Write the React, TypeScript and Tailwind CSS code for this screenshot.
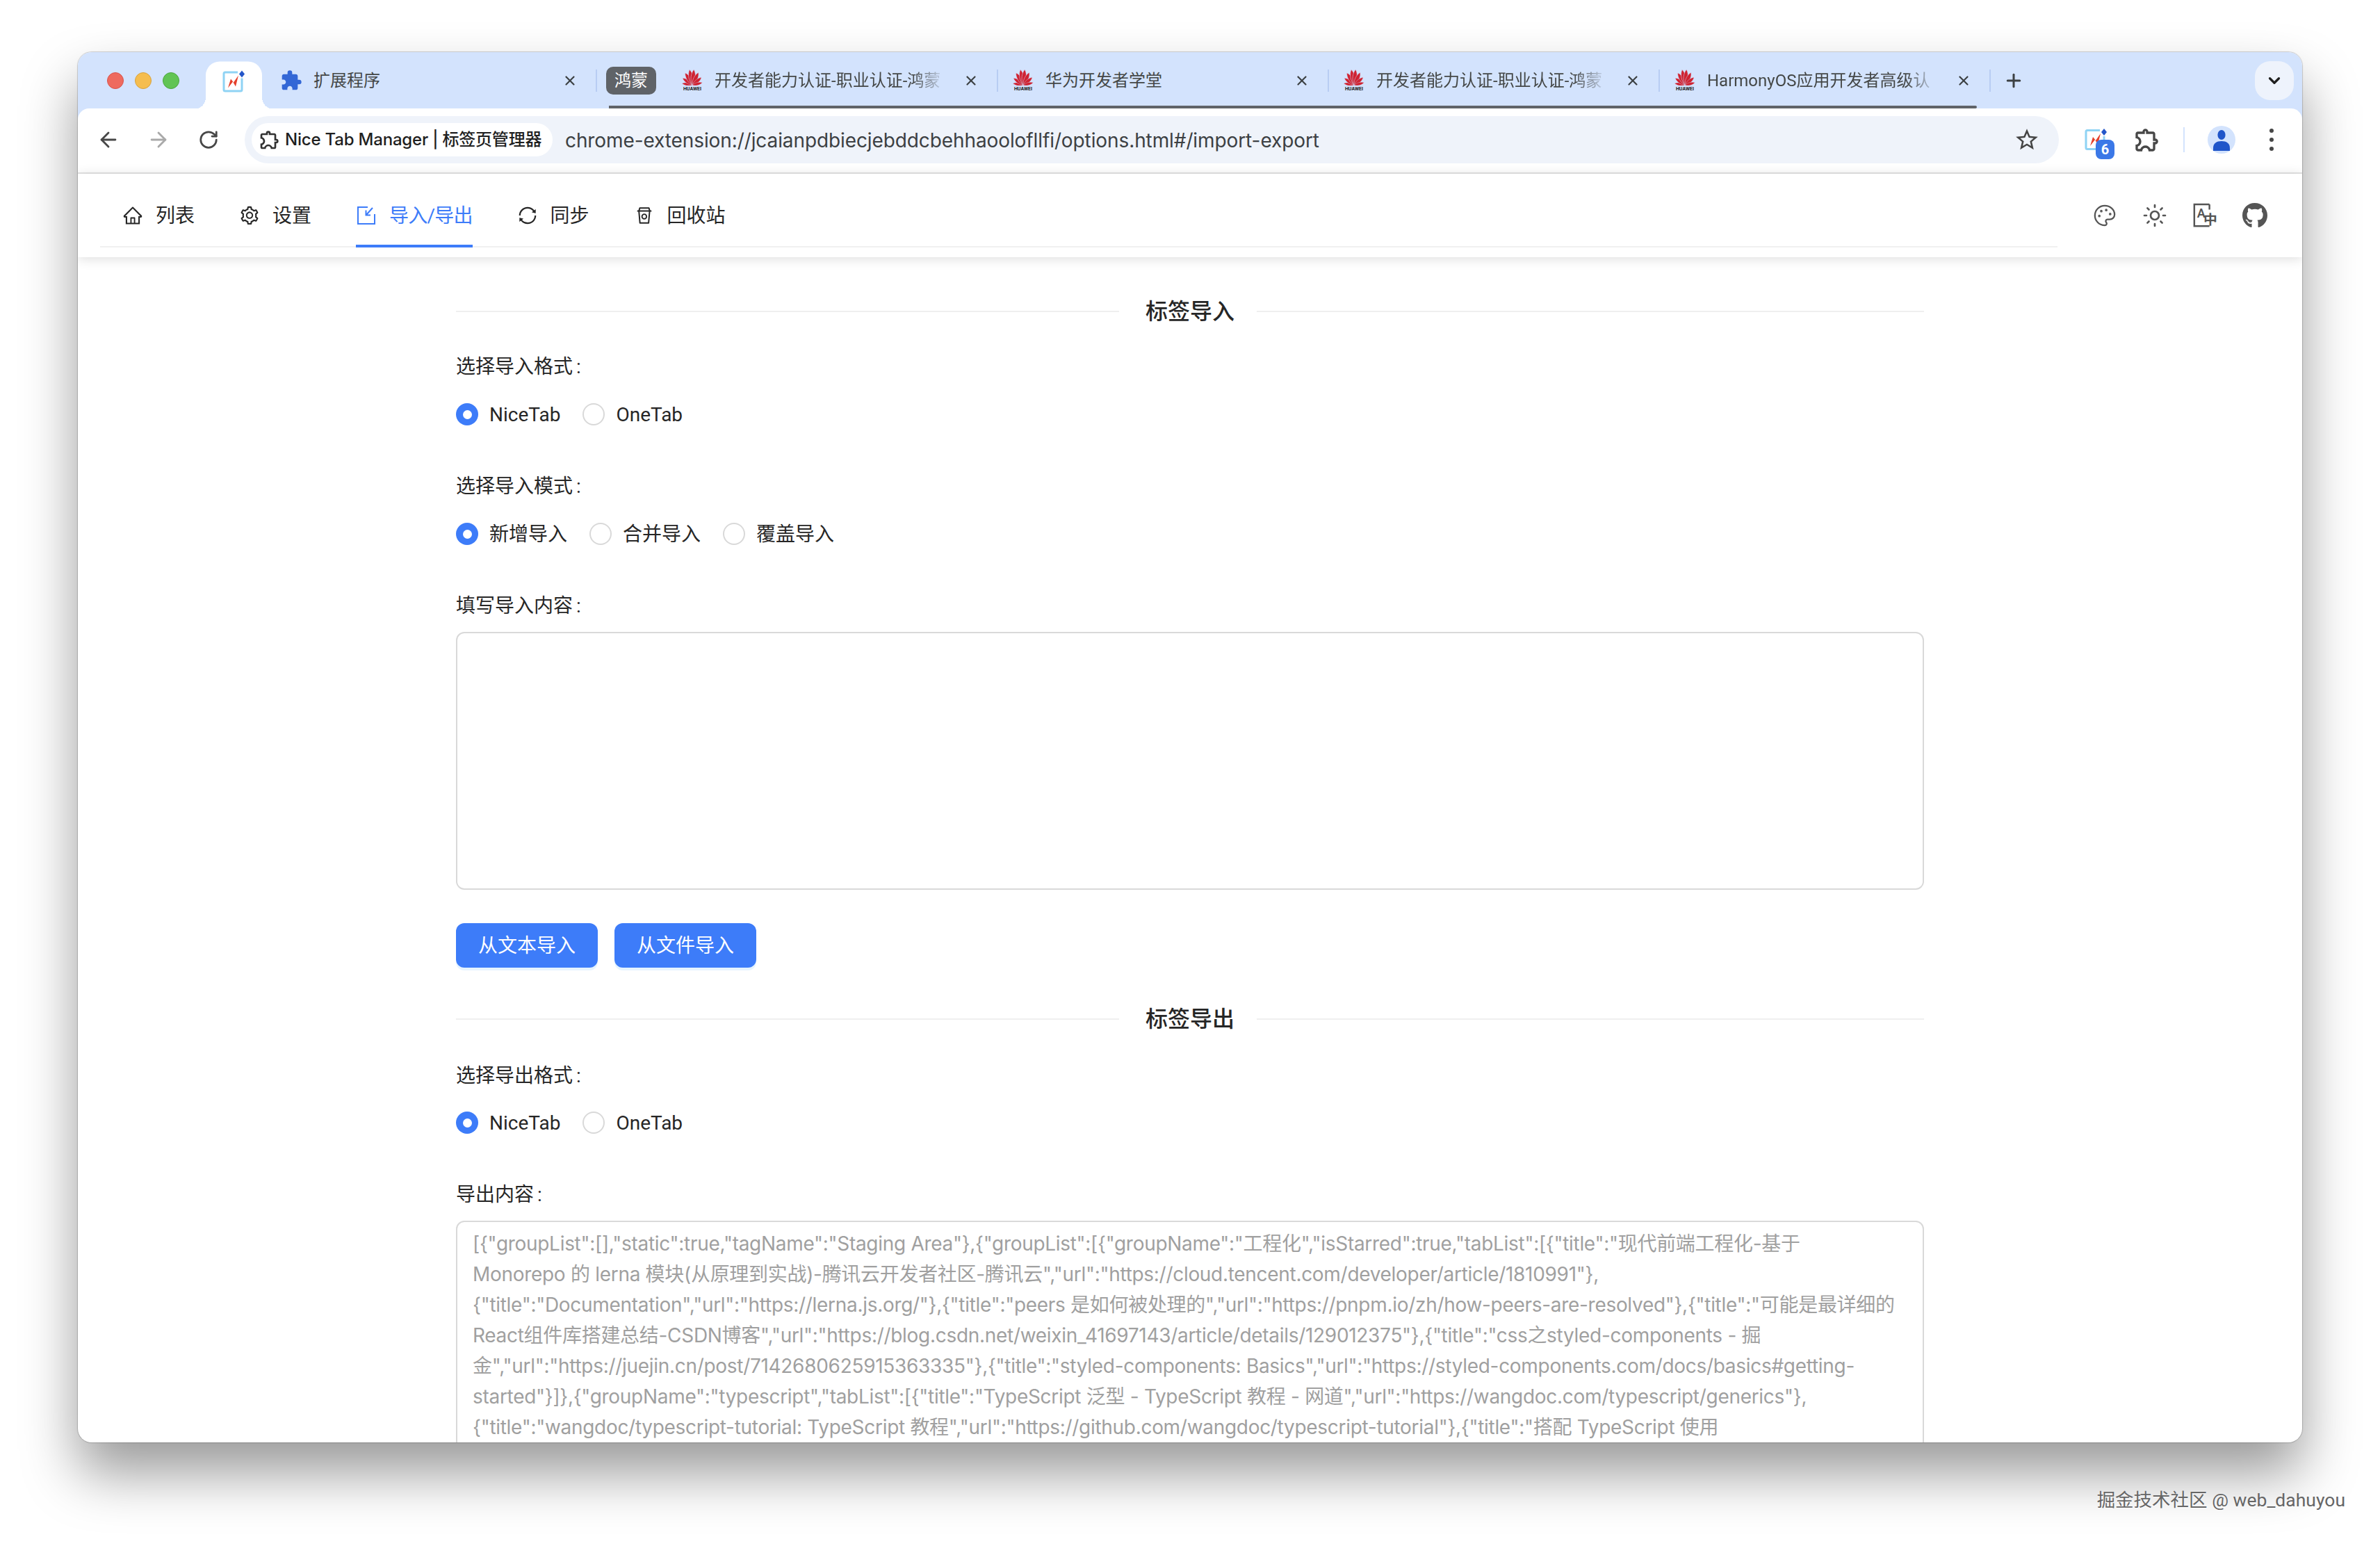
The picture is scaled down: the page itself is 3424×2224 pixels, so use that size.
import type { ReactNode } from 'react';
import { ArrowLeft, ArrowRight, ChevronDown, Palette, Plus, RotateCw, Sun, X } from 'lucide-react';
import { AiOutlineHome, AiOutlineRest, AiOutlineSetting, AiOutlineSync } from 'react-icons/ai';
import { FaGithub } from 'react-icons/fa';
import { MdExtension, MdOutlineExtension, MdOutlineStarBorder } from 'react-icons/md';

const exportLines = [
  '[{"groupList":[],"static":true,"tagName":"Staging Area"},{"groupList":[{"groupName":"工程化","isStarred":true,"tabList":[{"title":"现代前端工程化-基于',
  'Monorepo 的 lerna 模块(从原理到实战)-腾讯云开发者社区-腾讯云","url":"https://cloud.tencent.com/developer/article/1810991"},',
  '{"title":"Documentation","url":"https://lerna.js.org/"},{"title":"peers 是如何被处理的","url":"https://pnpm.io/zh/how-peers-are-resolved"},{"title":"可能是最详细的',
  'React组件库搭建总结-CSDN博客","url":"https://blog.csdn.net/weixin_41697143/article/details/129012375"},{"title":"css之styled-components - 掘',
  '金","url":"https://juejin.cn/post/7142680625915363335"},{"title":"styled-components: Basics","url":"https://styled-components.com/docs/basics#getting-',
  'started"}]},{"groupName":"typescript","tabList":[{"title":"TypeScript 泛型 - TypeScript 教程 - 网道","url":"https://wangdoc.com/typescript/generics"},',
  '{"title":"wangdoc/typescript-tutorial: TypeScript 教程","url":"https://github.com/wangdoc/typescript-tutorial"},{"title":"搭配 TypeScript 使用',
];

function HuaweiIcon() {
  const petals = [
    { a: -78, s: 0.66 },
    { a: -52, s: 0.76 },
    { a: -28, s: 0.9 },
    { a: -8, s: 1 },
    { a: 8, s: 1 },
    { a: 28, s: 0.9 },
    { a: 52, s: 0.76 },
    { a: 78, s: 0.66 },
  ];
  return (
    <span className="flex w-[32px] shrink-0 flex-col items-center">
      <svg width="32" height="24" viewBox="0 0 32 24">
        {petals.map((p, i) => (
          <path
            key={i}
            d="M16 23.5 C11.5 16 11.5 7 15 1 C19.5 6 20 16 16 23.5 Z"
            fill="#cf2231"
            stroke="#d3e3fd"
            strokeWidth="0.5"
            transform={`rotate(${p.a} 16 23.5) translate(16 23.5) scale(${p.s}) translate(-16 -23.5)`}
          />
        ))}
      </svg>
      <span className="mt-[1px] text-[7px] leading-[8px] font-bold text-[#222]">HUAWEI</span>
    </span>
  );
}

function NiceTabIcon() {
  return (
    <svg width="36" height="36" viewBox="0 0 36 36" className="shrink-0">
      <path d="M23 4.5H5a2 2 0 0 0-2 2v23a2 2 0 0 0 2 2h22a2 2 0 0 0 2-2V13" fill="none" stroke="#8fd3f4" strokeWidth="3" />
      <path d="M9 27 L13 14 L17 19 L24 9 L20 25 L16 18 Z" fill="#e5402c" />
      <path d="M29 2 L33 7 L29 12 L25 7 Z" fill="#2456c9" />
    </svg>
  );
}

function ChromeTab({ icon, title, fade = true }: { icon: ReactNode; title: string; fade?: boolean }) {
  return (
    <div className="flex h-[40px] w-[456px] shrink-0 items-center">
      <span className="flex w-[32px] shrink-0 justify-center">{icon}</span>
      <span
        className={
          fade
            ? 'ml-[16px] w-[332px] overflow-hidden text-[24px] leading-[32px] whitespace-nowrap text-[#444746] [mask-image:linear-gradient(to_right,black_86%,transparent)]'
            : 'ml-[16px] w-[332px] overflow-hidden text-[24px] leading-[32px] whitespace-nowrap text-[#444746]'
        }
      >
        {title}
      </span>
      <span className="ml-[25px] flex w-[24px] justify-center">
        <X size={22} strokeWidth={2.4} className="text-[#3c4043]" />
      </span>
      <span className="ml-[25px] h-[32px] w-[2px] bg-[#b8cdf3]" />
    </div>
  );
}

function TabStrip() {
  return (
    <div className="flex h-[81px] shrink-0 items-center bg-[#d3e3fd]">
      <div className="ml-[42px] flex gap-[16px]">
        <span className="size-[24px] rounded-full border border-[#d9534c] bg-[#ee6a5f]" />
        <span className="size-[24px] rounded-full border border-[#d8a23c] bg-[#f5bd4f]" />
        <span className="size-[24px] rounded-full border border-[#4da63f] bg-[#61c454]" />
      </div>
      {/* active tab with the little flares at its foot */}
      <div className="relative ml-[38px] flex h-[68px] w-[81px] translate-y-[6.5px] items-center justify-center rounded-t-[20px] bg-white">
        <span className="absolute bottom-0 -left-[16px] size-[16px] bg-[radial-gradient(circle_at_0_0,transparent_16px,white_16px)]" />
        <span className="absolute -right-[16px] bottom-0 size-[16px] bg-[radial-gradient(circle_at_100%_0,transparent_16px,white_16px)]" />
        <span className="-mt-[10px]">
          <NiceTabIcon />
        </span>
      </div>
      <div className="ml-[26px]">
        <ChromeTab icon={<MdExtension size={32} className="text-[#3367d6]" />} title="扩展程序" fade={false} />
      </div>
      <div className="relative ml-[13px] flex items-center">
        <span className="flex h-[40px] w-[72px] items-center justify-center rounded-[10px] bg-[#5f6368] text-[24px] leading-[32px] text-white">
          鸿蒙
        </span>
        <div className="ml-[36px] flex gap-[20px]">
          <ChromeTab icon={<HuaweiIcon />} title="开发者能力认证-职业认证-鸿蒙" />
          <ChromeTab icon={<HuaweiIcon />} title="华为开发者学堂" fade={false} />
          <ChromeTab icon={<HuaweiIcon />} title="开发者能力认证-职业认证-鸿蒙" />
          <ChromeTab icon={<HuaweiIcon />} title="HarmonyOS应用开发者高级认" />
        </div>
        <span className="absolute right-[20px] -bottom-[20px] left-[4px] h-[4px] rounded-r-[2px] bg-[#5f6368]" />
      </div>
      <Plus size={30} strokeWidth={2.4} className="ml-[18px] text-[#3c4043]" />
      <div className="mr-[12px] ml-auto flex h-[56px] w-[56px] items-center justify-center rounded-[22px] bg-[#eef3fc]">
        <ChevronDown size={26} strokeWidth={3} className="text-[#1f1f1f]" />
      </div>
    </div>
  );
}

function Toolbar() {
  return (
    <div className="flex h-[94px] items-center rounded-t-[16px] border-b-2 border-[#e4e4e4] bg-white pb-[2px]">
      <ArrowLeft size={34} strokeWidth={2} className="ml-[27px] text-[#474747]" />
      <ArrowRight size={34} strokeWidth={2} className="ml-[38px] text-[#a9a9a9]" />
      <RotateCw size={30} strokeWidth={2.2} className="ml-[40px] text-[#474747]" />
      <div className="ml-[37px] flex h-[68px] w-[2610px] items-center rounded-full bg-[#eff3fa]">
        <div className="ml-[10px] flex h-[48px] w-[433px] items-center rounded-full bg-white pl-[10px]">
          <MdOutlineExtension size={32} className="text-[#333]" />
          <span className="ml-[6px] font-['Inter','Noto_Sans_CJK_SC',sans-serif] text-[24px] leading-[32px] font-medium tracking-[-0.2px] whitespace-nowrap text-[#1f1f1f]">
            Nice Tab Manager | 标签页管理器
          </span>
        </div>
        <span className="ml-[18px] pt-[2px] font-['Inter',sans-serif] text-[28px] leading-[36px] tracking-[-0.1px] whitespace-nowrap text-[#3c4043]">
          chrome-extension://jcaianpdbiecjebddcbehhaoolofllfi/options.html#/import-export
        </span>
        <MdOutlineStarBorder size={38} className="mr-[27px] ml-auto text-[#444]" />
      </div>
      <div className="relative ml-[36px] flex">
        <NiceTabIcon />
        <span className="absolute -right-[8px] -bottom-[10px] flex h-[28px] w-[27px] items-center justify-center rounded-[8px] bg-[#3b78e7] text-[20px] leading-[24px] font-bold text-white">
          6
        </span>
      </div>
      <MdOutlineExtension size={40} className="ml-[35px] text-[#474747]" />
      <span className="ml-[32px] h-[36px] w-[2px] bg-[#d3e3fd]" />
      <span className="ml-[33px] flex h-[40px] w-[40px] items-center justify-center overflow-hidden rounded-full bg-[#d3e3fd]">
        <svg width="28" height="32" viewBox="0 0 28 32" fill="#1f55c9">
          <ellipse cx="14" cy="9" rx="5.6" ry="7" />
          <path d="M2 28c0-7 5-10 12-10s12 3 12 10v4H2z" />
        </svg>
      </span>
      <span className="ml-[49px] flex flex-col gap-[7px]">
        <span className="size-[6px] rounded-full bg-[#474747]" />
        <span className="size-[6px] rounded-full bg-[#474747]" />
        <span className="size-[6px] rounded-full bg-[#474747]" />
      </span>
    </div>
  );
}

function ImportIcon() {
  return (
    <svg width="30" height="30" viewBox="0 0 30 30" fill="none" stroke="#3d7cf9" strokeWidth="2">
      <path d="M17 3H3v24h24V13" />
      <path d="M24 4l-9 10M14.5 7.5v7H21" />
    </svg>
  );
}

function NavTab({ icon, label, active = false }: { icon: ReactNode; label: string; active?: boolean }) {
  return (
    <div
      className={
        active
          ? '-mb-[2px] flex h-[106px] items-center gap-[18px] border-b-4 border-[#3d7cf9] pt-[18px] tracking-[-0.8px] text-[#3d7cf9]'
          : '-mb-[2px] flex h-[106px] items-center gap-[18px] border-b-4 border-transparent pt-[18px] text-[#262626]'
      }
    >
      <span className="flex w-[30px] justify-center">{icon}</span>
      <span className="pt-[2px] text-[28px] leading-[44px] whitespace-nowrap">{label}</span>
    </div>
  );
}

function TranslateIcon() {
  return (
    <svg width="38" height="38" viewBox="0 0 38 38" fill="none">
      <path d="M26 2H3v33h23M26 2v8" stroke="#555" strokeWidth="2.6" />
      <text x="7" y="22" fontSize="19" fontWeight="600" fill="#555" fontFamily="Roboto, sans-serif">A</text>
      <text x="17" y="33" fontSize="21" fontWeight="600" fill="#555" fontFamily="'Noto Sans CJK SC', sans-serif">中</text>
    </svg>
  );
}

function NavBar() {
  return (
    <div className="relative z-10 flex h-[120px] shrink-0 items-center bg-white shadow-[0_2px_16px_rgba(0,0,0,0.14)]">
      <div className="ml-[32px] flex h-[106px] w-[2816px] gap-[64px] self-start border-b-2 border-[#f0f0f0] pl-[32px]">
        <NavTab icon={<AiOutlineHome size={32} />} label="列表" />
        <NavTab icon={<AiOutlineSetting size={32} />} label="设置" />
        <NavTab icon={<ImportIcon />} label="导入/导出" active />
        <NavTab icon={<AiOutlineSync size={32} />} label="同步" />
        <NavTab icon={<AiOutlineRest size={30} />} label="回收站" />
      </div>
      <div className="ml-[50px] flex gap-[36px] text-[#555]">
        <span className="flex size-[36px] items-center justify-center"><Palette size={34} strokeWidth={1.6} /></span>
        <span className="flex size-[36px] items-center justify-center"><Sun size={38} strokeWidth={1.8} /></span>
        <span className="flex size-[36px] items-center justify-center"><TranslateIcon /></span>
        <span className="flex size-[36px] items-center justify-center"><FaGithub size={38} /></span>
      </div>
    </div>
  );
}

function Divider({ label }: { label: string }) {
  return (
    <div className="flex h-[44px] items-center">
      <span className="h-[2px] w-[954px] bg-[#efefef]" />
      <span className="pr-[32px] pl-[38px] text-[32px] leading-[44px] font-medium text-[#262626]">{label}</span>
      <span className="h-[2px] flex-1 bg-[#efefef]" />
    </div>
  );
}

function Label({ children }: { children: string }) {
  return (
    <div className="h-[44px] pt-[2px] text-[28px] leading-[44px] text-[#262626]">
      {children}
      <span className="ml-[5px]">:</span>
    </div>
  );
}

function RadioGroup({ options }: { options: string[] }) {
  return (
    <div className="flex h-[44px] items-center gap-[32px]">
      {options.map((o, i) => (
        <span key={o} className="flex items-center gap-[16px]">
          {i === 0 ? (
            <span className="flex size-[32px] items-center justify-center rounded-full bg-[#3d7cf9]">
              <span className="size-[13px] rounded-full bg-white" />
            </span>
          ) : (
            <span className="size-[32px] rounded-full border-2 border-[#d9d9d9] bg-white" />
          )}
          <span className="pt-[2px] text-[28px] leading-[44px] text-[#262626]">{o}</span>
        </span>
      ))}
    </div>
  );
}

function PrimaryButton({ children }: { children: string }) {
  return (
    <button
      type="button"
      className="flex h-[64px] w-[204px] items-center justify-center rounded-[12px] bg-[#3d7cf9] pt-[2px] text-[28px] text-white shadow-[0_4px_0_rgba(5,145,255,0.1)]"
    >
      {children}
    </button>
  );
}

export default function App() {
  return (
    <div className="h-[2224px] w-[3424px] overflow-hidden bg-white pt-[75px] font-['Roboto','Noto_Sans_CJK_SC',sans-serif]">
      <div className="ml-[112px] flex h-[2000px] w-[3200px] flex-col overflow-hidden rounded-[20px] bg-white shadow-[0_44px_80px_rgba(0,0,0,0.4),0_0_1px_1px_rgba(0,0,0,0.18)]">
        <TabStrip />
        <div className="shrink-0 bg-[#d3e3fd]">
          <Toolbar />
        </div>
        <NavBar />
        <main className="mx-auto w-[2112px] shrink-0">
          <div className="mt-[56px]"><Divider label="标签导入" /></div>
          <div className="mt-[34px]"><Label>选择导入格式</Label></div>
          <div className="mt-[26px]"><RadioGroup options={['NiceTab', 'OneTab']} /></div>
          <div className="mt-[58px]"><Label>选择导入模式</Label></div>
          <div className="mt-[26px]"><RadioGroup options={['新增导入', '合并导入', '覆盖导入']} /></div>
          <div className="mt-[58px]"><Label>填写导入内容</Label></div>
          <div className="mt-[17px] h-[371px] rounded-[12px] border-2 border-[#d9d9d9] bg-white" />
          <div className="mt-[48px] flex gap-[24px]">
            <PrimaryButton>从文本导入</PrimaryButton>
            <PrimaryButton>从文件导入</PrimaryButton>
          </div>
          <div className="mt-[52px]"><Divider label="标签导出" /></div>
          <div className="mt-[36px]"><Label>选择导出格式</Label></div>
          <div className="mt-[25px]"><RadioGroup options={['NiceTab', 'OneTab']} /></div>
          <div className="mt-[58px]"><Label>导出内容</Label></div>
          <div className="mt-[17px] h-[500px] rounded-[12px] border-2 border-[#d9d9d9] bg-white px-[22px] pt-[9px] font-['Inter','Noto_Sans_CJK_SC',sans-serif] text-[28px] leading-[44px] tracking-[-0.3px] text-[#a0a0a0]">
            {exportLines.map((line) => (
              <div key={line} className="whitespace-nowrap">{line}</div>
            ))}
          </div>
        </main>
      </div>
      <div className="mt-[65px] flex justify-end pr-[50px] text-[26.5px] leading-[36px] text-[#666] [text-shadow:0_1px_2px_rgba(255,255,255,0.8)]">
        掘金技术社区 @ web_dahuyou
      </div>
    </div>
  );
}
